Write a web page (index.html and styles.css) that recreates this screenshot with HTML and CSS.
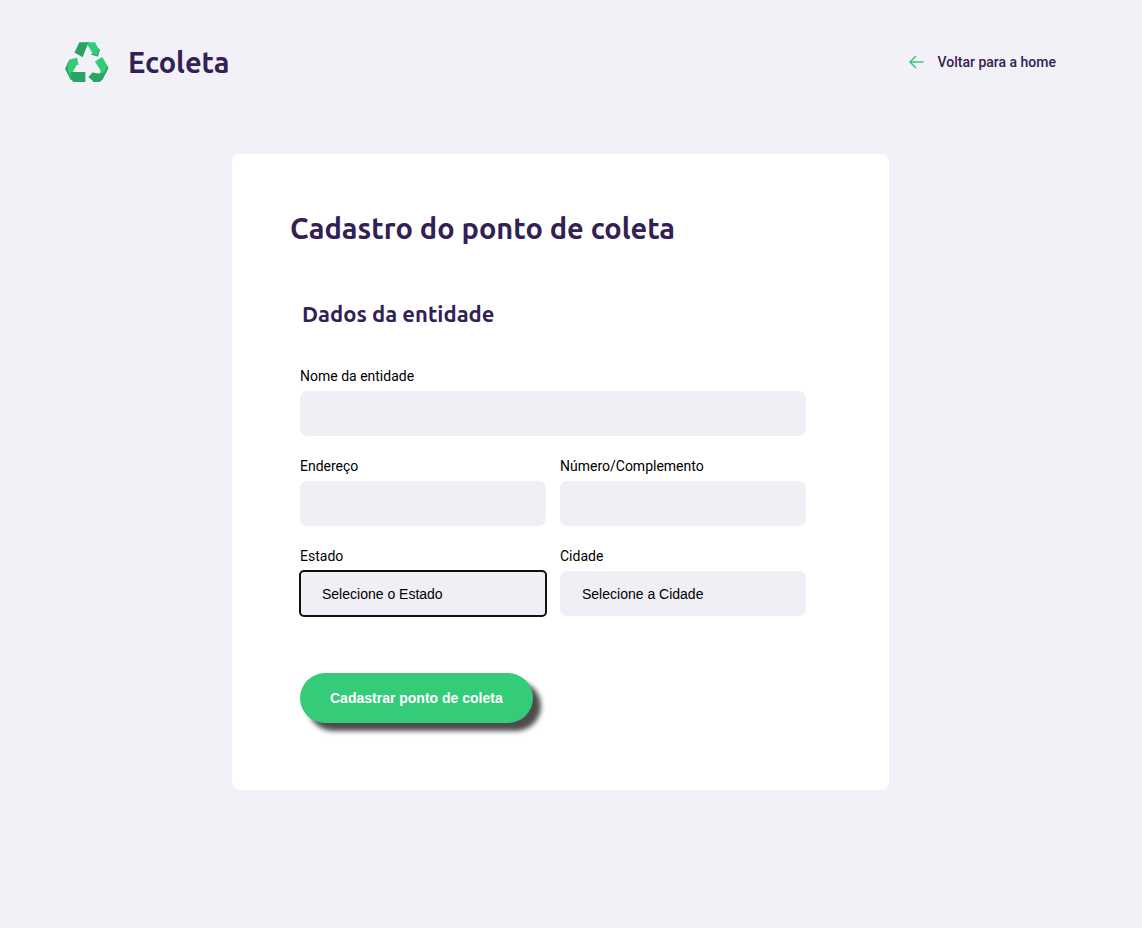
FILE: index.html
```html
<!DOCTYPE html>
<html lang="pt-BR">
<head>
<meta charset="utf-8">
<meta name="viewport" content="width=device-width, initial-scale=1">
<title>Ecoleta</title>
<link rel="stylesheet" href="styles.css">
</head>
<body>
<div class="page">
  <header class="header">
    <div class="brand">
      <svg class="brand-mark" viewBox="14 20 132 121" aria-hidden="true">
        <path fill="#34cb79" d="M76 21h28l10 18 5 4-6 21-21-6 4-5-16-27z"/>
        <path fill="#2aa462" d="M113 64l-21-6 3-2 16 4 5-19 3 2z"/>
        <path fill="#2aa462" d="M57 21h28l-6 14-12 31-25-14z"/>
        <path fill="#34cb79" d="M27 73l23-5 5 22-5-2-14 24 3 29-9-8-16-31z"/>
        <path fill="#2aa462" d="M27 73l-13 28 16 32 3 3-12-35z"/>
        <path fill="#2aa462" d="M31 111h44v30H39l-8-12z"/>
        <path fill="#34cb79" d="M104 79l22-14 19 32-11 24-17 1 4-15-7-12z"/>
        <path fill="#2aa462" d="M145 97l-18 37-9 7H98v-3l-14-12 14-15v-3l1 5 21 3 11-4 10-17z"/>
      </svg>
      <span class="brand-name">Ecoleta</span>
    </div>
    <a class="back" href="#">
      <svg class="back-icon" viewBox="0 0 16 16" aria-hidden="true">
        <path d="M15.500 8H2M8 2L2 8L8 14"/>
      </svg>
      Voltar para a home
    </a>
  </header>
  <main class="card">
    <h1 class="title">Cadastro do ponto de coleta</h1>
    <form class="form">
      <h2 class="subtitle">Dados da entidade</h2>
      <div class="fields">
        <div class="field field-wide">
          <label class="label" for="name">Nome da entidade</label>
          <input class="control" id="name" type="text">
        </div>
        <div class="field">
          <label class="label" for="address">Endereço</label>
          <input class="control" id="address" type="text">
        </div>
        <div class="field">
          <label class="label" for="number">Número/Complemento</label>
          <input class="control" id="number" type="text">
        </div>
        <div class="field">
          <label class="label" for="state">Estado</label>
          <select class="control control-active" id="state"><option>Selecione o Estado</option></select>
        </div>
        <div class="field">
          <label class="label" for="city">Cidade</label>
          <select class="control" id="city"><option>Selecione a Cidade</option></select>
        </div>
      </div>
      <button class="submit" type="button">Cadastrar ponto de coleta</button>
    </form>
  </main>
</div>
</body>
</html>
```
FILE: styles.css
```css
* {
  box-sizing: border-box;
}

body {
  margin: 0;
  min-height: 100vh;
  background: #f2f1f8;
  color: #000;
  font-family: Roboto, sans-serif;
}

.page {
  padding: 40px 86px 40px 65px;
}

.header {
  display: flex;
  justify-content: space-between;
  align-items: center;
  height: 44px;
}

.brand {
  display: flex;
  align-items: center;
  gap: 19px;
}

.brand-mark {
  width: 44px;
  height: 40px;
}

.brand-name {
  color: #322153;
  font: bold 29px/40px Ubuntu, "Noto Sans", sans-serif;
}

.back {
  display: flex;
  align-items: center;
  gap: 14px;
  color: #322153;
  font-size: 14px;
  font-weight: 500;
  text-decoration: none;
}

.back-icon {
  width: 16px;
  height: 16px;
  fill: none;
  stroke: #34cb79;
  stroke-width: 1.5;
}

.card {
  max-width: 657px;
  margin: 70px auto 0;
  padding: 54px 58px 67px;
  border-radius: 8px;
  background: #fff;
}

.title {
  margin: 0;
  color: #322153;
  font: bold 29px/40px Ubuntu, "Noto Sans", sans-serif;
}

.form {
  padding: 50px 25px 0 10px;
}

.subtitle {
  margin: 0 2px;
  color: #322153;
  font: bold 22px/32px Ubuntu, "Noto Sans", sans-serif;
}

.fields {
  display: grid;
  grid-template-columns: 1fr 1fr;
  gap: 22px 14px;
  margin-top: 38px;
}

.field {
  display: flex;
  flex-direction: column;
  gap: 7px;
}

.field-wide {
  grid-column: 1 / -1;
}

.label {
  font-size: 14px;
  line-height: 16px;
}

.control {
  width: 100%;
  height: 45px;
  padding: 0 22px;
  border: 0;
  border-radius: 7px;
  background: #f0eff5;
  color: #000;
  font: 14px "Liberation Sans", Arial, sans-serif;
  appearance: none;
}

.control-active,
.control:focus {
  outline: 2px solid #101010;
  outline-offset: -1px;
  border-radius: 4px;
}

.submit {
  display: block;
  height: 50px;
  margin-top: 57px;
  padding: 0 30px;
  border: 0;
  border-radius: 25px;
  background: #34cb79;
  box-shadow: 8px 8px 5px rgba(0, 0, 0, 0.7);
  color: #fff;
  font: bold 14px "Liberation Sans", Arial, sans-serif;
}

@media (max-width: 600px) {
  .page {
    padding: 24px;
  }

  .card {
    padding: 32px 24px;
  }

  .form {
    padding: 32px 0 0;
  }

  .fields {
    grid-template-columns: 1fr;
  }
}
```
